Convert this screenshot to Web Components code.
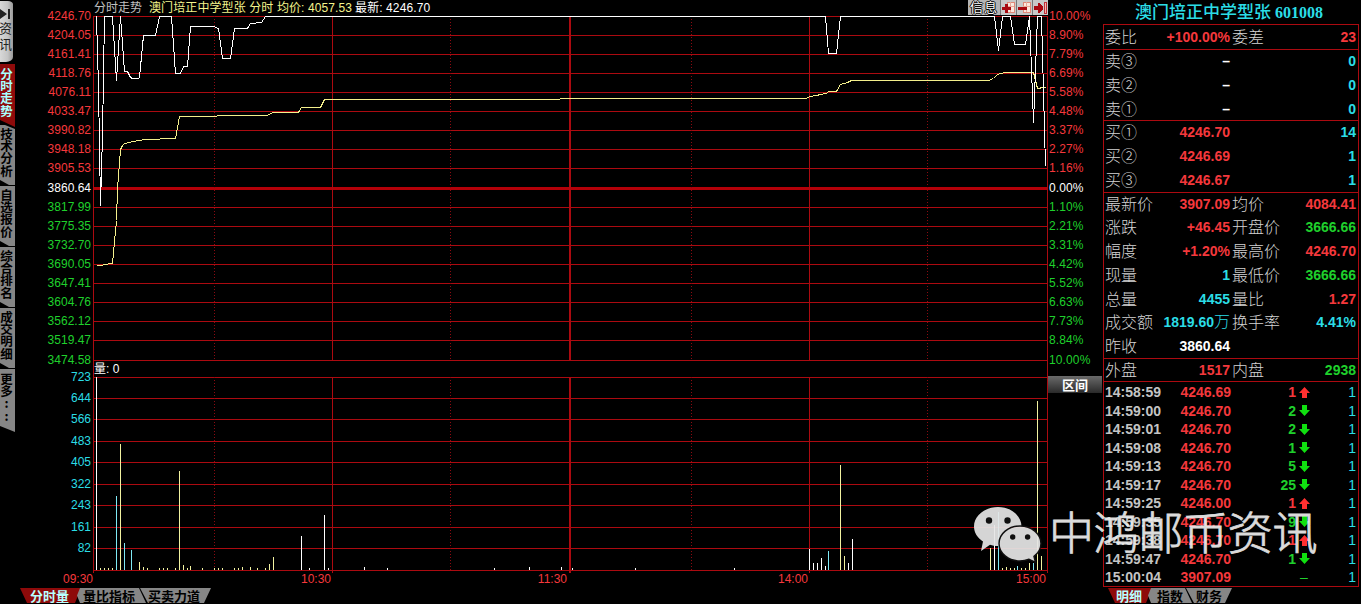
<!DOCTYPE html>
<html lang="zh-CN">
<head>
<meta charset="utf-8">
<title>分时走势</title>
<style>
    :root {
        --red: #f5383c;
        --green: #1fd02c;
        --cyan: #2bdde6;
        --line: #ac0a10;
    }
    body {
        margin: 0;
        background: #000;
        color: #c0c0c0;
        font: 12px/16px "Liberation Sans", "Noto Sans CJK SC", sans-serif;
        width: 1361px;
        height: 604px;
        overflow: hidden;
        display: flex;
        position: relative;
    }
</style>
</head>
<body>
<side-tabs></side-tabs>
<stock-chart></stock-chart>
<quote-panel></quote-panel>
<chat-watermark>中鸿邮币资讯</chat-watermark>

<script>
// Tab di sisi kiri
class SideTabs extends HTMLElement {
    connectedCallback() {
        this.attachShadow({ mode: 'open' });
        const tabs = ['技术分析', '自选报价', '综合排名', '成交明细'];
        this.shadowRoot.innerHTML = `
            <style>
                :host { display: block; width: 15px; flex: none; font-family: "Noto Sans CJK SC", sans-serif; }
                div { width: 13px; padding-right: 2px; box-sizing: content-box; overflow: hidden; text-align: center; word-break: break-all; }
                .news {
                    width: 13px; height: 54px; padding: 7px 0 0; margin-top: 1px; color: #222;
                    font-size: 13px; line-height: 16px; border-radius: 0 5px 7px 0 / 0 3px 5px 0;
                    background: linear-gradient(90deg, #d8d8d8, #c4c4c4 60%, #999);
                }
                .news svg { display: block; margin-bottom: -1px; }
                .news span { display: block; width: 13px; margin-left: -1px; }
                .on, .tab, .more { font-size: 12.5px; font-weight: 700; line-height: 12.2px; }
                .on {
                    height: 59px; padding-top: 4px; margin-top: 2px; background: #8e0a0a; color: #a8ffff;
                    clip-path: polygon(0 0, 100% 0, 100% 100%, 0 56px);
                }
                .tab, .more { background: #868686; color: #000; }
                .tab {
                    height: 57px; padding-top: 3px; margin-bottom: 1px;
                    clip-path: polygon(0 0, 100% 0, 100% 100%, 9px 100%, 0 calc(100% - 5px));
                }
                .first { margin-top: -2px; clip-path: polygon(0 0, 5px 0, 100% 4px, 100% 100%, 9px 100%, 0 calc(100% - 5px)); }
                .more { height: 59px; padding-top: 4px; clip-path: polygon(0 0, 100% 0, 100% 100%, 0 57px); }
            </style>
            <div class="news">
                <svg width="12" height="13"><path d="M0 1v10l7-5zM8 1h2v10h-2z" fill="#222"/></svg>
                <span>资讯</span>
            </div>
            <div class="on">分时走势</div>
            ${tabs.map((t, i) => `<div class="tab ${i ? '' : 'first'}">${t}</div>`).join('')}
            <div class="more">更多<br>:<br>:</div>
        `;
    }
}
customElements.define('side-tabs', SideTabs);

// Label sumbu: setiap tanda sejajar dengan garis grid
class AxisScale extends HTMLElement {
    connectedCallback() {
        this.attachShadow({ mode: 'open' });
        const labels = this.getAttribute('labels').split(' ');
        const at = this.getAttribute('at').split(' ').map(Number);
        const zero = Number(this.getAttribute('zero') || -1);
        const rows = labels.map((t, i) => {
            const h = i < at.length - 1 ? at[i + 1] - at[i] : 19;
            const cls = zero < 0 ? 'vol' : i < zero ? 'up' : i > zero ? 'down' : 'mid';
            return `<div class="${cls}" style="height:${h}px">${t}</div>`;
        });
        this.shadowRoot.innerHTML = `
            <style>
                :host { display: block; line-height: 19px; }
                .up { color: var(--red); }
                .down { color: var(--green); }
                .mid { color: #fff; }
                .vol { color: var(--cyan); }
            </style>
            ${rows.join('')}
        `;
    }
}
customElements.define('axis-scale', AxisScale);

const PRICE_Y = [16, 35, 54, 73, 92, 111, 130, 149, 168, 188, 207, 226, 245, 264, 283, 302, 321, 340, 360];
const VOL_Y = [377, 398, 419, 441, 462, 484, 505, 527, 548, 570];

const PRICE = '96,16 98,87 100,205 102,135 104,16 112,16 116,80 120,16 124,71 127,71 130,77 132,78 138,78 139,77 143,35 155,35 159,16 171,16 175,73 180,73 183,66 187,66 190,26 213,26 218,28 222,58 230,58 234,28 247,28 250,23 261,22 265,16 825,16 828,53 836,53 840,16 994,16 998,50 1002,16 1010,16 1014,44 1025,44 1029,16 1033,122 1037,16 1041,16 1045,166';
const AVERAGE = '96,265 102,265 103,264 112,263 116,220 117,188 120,149 122,145 124,143 129,142 132,141 145,139 175,138 179,116 216,116 217,115 266,115 273,112 298,112 301,107 320,107 324,99 559,99 560,98 806,98 809,96 816,95 820,94 826,93 828,91 836,91 840,84 847,82 851,80 988,80 993,78 997,74 1004,72 1033,72 1037,88 1039,88 1041,87 1045,87';

// x, puncak batang, warna
const BARS = `96,377,w 100,568 104,568 108,568 112,568 116,496,c 120,444 124,543,c 131,550,c 139,562 143,567 147,568
    159,568 163,568 167,568 175,568 179,471 183,565 187,568 190,566 202,568 214,568 218,568 222,568 234,568 238,568
    242,567 250,567 257,568 265,568 269,564 273,557 301,536,w 309,568,w 324,515,w 328,568,w 364,567,w 387,568,w
    494,568,w 529,567,w 561,567,w 572,568,w 635,568,w 734,568,w 809,549,w 813,563,w 817,563,w 821,558,w 825,566,w
    828,551,c 840,465 844,556 848,563,w 852,539,w 990,548 994,525,w 998,512,c 1002,568 1006,567 1010,568 1014,568
    1017,566,c 1021,568 1025,568 1029,563 1033,563,c 1037,401 1041,556`;

class PlotArea extends HTMLElement {
    connectedCallback() {
        this.attachShadow({ mode: 'open' });
        const hLines = PRICE_Y.concat(VOL_Y).map(y => y === 188
            ? '<rect x="93" y="187" width="954" height="3" fill="#b40008"/>'
            : `<rect x="93" y="${y}" width="954" height="1"/>`).join('');
        const spans = [[16, 345], [377, 196]];
        const vLines = spans.map(([y, h]) =>
            `<rect x="332" y="${y}" width="1" height="${h}"/>
             <rect x="569" y="${y}" width="2" height="${h}"/>
             <rect x="809" y="${y}" width="1" height="${h}"/>` +
            [214, 450, 691, 927].map(x => `<path d="M${x}.5 ${y}v${y === 377 ? 193 : h}" class="dot"/>`).join('')
        ).join('');
        const colors = { w: '#fff', c: '#7fe9f5' };
        const bars = BARS.trim().split(/\s+/).map(b => {
            const [x, y, c] = b.split(',');
            return `<rect x="${x}" y="${y}" width="1" height="${570 - y}" fill="${colors[c] || '#f2f2a0'}"/>`;
        }).join('');
        this.shadowRoot.innerHTML = `
            <style>
                :host { display: block; }
                svg { display: block; shape-rendering: crispEdges; }
                .grid { fill: var(--line); }
                .dot { stroke: #8c0a10; stroke-dasharray: 1 2; fill: none; }
                polyline { fill: none; stroke-width: 1; }
                text { font-size: 12px; fill: #fff; }
            </style>
            <svg width="955" height="558" viewBox="93 15 955 558">
                <g class="grid">
                    ${hLines}${vLines}
                    <rect x="93" y="16" width="1" height="557"/>
                    <rect x="1047" y="16" width="1" height="557"/>
                </g>
                ${bars}
                <g transform="translate(.5 .5)">
                    <polyline points="${AVERAGE}" stroke="#f4f08c"/>
                    <polyline points="${PRICE}" stroke="#fff"/>
                </g>
                <text x="94" y="373">量: 0</text>
            </svg>
        `;
    }
}
customElements.define('plot-area', PlotArea);

// Baris judul di atas grafik beserta tombol kecil
class ChartHeader extends HTMLElement {
    connectedCallback() {
        this.attachShadow({ mode: 'open' });
        this.shadowRoot.innerHTML = `
            <style>
                :host { display: flex; height: 15px; line-height: 17px; padding-left: 1px; white-space: pre; }
                .y { color: #f4f48c; margin-left: 7px; }
                .w { color: #fff; margin-left: 3px; }
                .y, .w { letter-spacing: .1px; }
                .tools { margin-left: auto; display: flex; background: #b4b4b4; width: 80px; line-height: 15px; }
                .info { width: 32px; text-align: center; font-size: 13px; color: #fff; letter-spacing: 1px;
                    text-shadow: 1px 0 #000, -1px 0 #000, 0 1px #000, 0 -1px #000; }
                svg { display: block; }
            </style>
            <span>分时走势</span><span class="y">澳门培正中学型张 分时 均价: 4057.53</span><span class="w">最新: 4246.70</span>
            <div class="tools">
                <span class="info">信息</span>
                <svg width="48" height="15" shape-rendering="crispEdges">
                    <path d="M0 0h48v15h-48z" fill="#c8c8c8"/>
                    <path d="M0 0v15M16 0v15M32 0v15" stroke="#777"/>
                    <path d="M7.500 2.500h7v10h-7zM23.500 2.500h7v10h-7z" fill="#fbe8de" stroke="#e08878"/>
                    <path d="M10 2v10M7 6.500h7M26 2v10M23 6.500h7" stroke="#e8a898"/>
                    <path d="M5 4h3v3h3v3h-3v3h-3v-3h-3v-3h3zM18 7h9v3h-9z" fill="#a80810"/>
                    <path d="M34 6h4v-3h1l4 4v2l-4 4h-1v-3h-4z" fill="#a80810"/>
                    <path d="M44.500 2.500h2v11h-2z" fill="#f4b8b0" stroke="#c03038"/>
                </svg>
            </div>
        `;
    }
}
customElements.define('chart-header', ChartHeader);

// Tab trapesium di bagian bawah
class CutTab extends HTMLElement {
    connectedCallback() {
        this.attachShadow({ mode: 'open' });
        this.shadowRoot.innerHTML = `
            <style>
                :host {
                    display: block; height: 15px; flex: none; box-sizing: border-box;
                    font: 700 13px/15px "Noto Sans CJK SC", sans-serif;
                    background: #868686; color: #000; white-space: nowrap;
                    clip-path: polygon(3px 0, calc(100% - 7px) 0, 100% 100%, 3px 100%, 0 50%);
                }
                :host([kind="on"]) {
                    background: #8e0a0a; color: #b8ffff;
                    clip-path: polygon(0 0, 100% 0, calc(100% - 6px) 100%, 7px 100%);
                }
                :host([kind="last"]) { clip-path: polygon(0 0, 100% 0, calc(100% - 7px) 100%, 8px 100%); }
            </style>
            <slot></slot>
        `;
    }
}
customElements.define('cut-tab', CutTab);

class StockChart extends HTMLElement {
    connectedCallback() {
        this.attachShadow({ mode: 'open' });
        const prices = '4246.70 4204.05 4161.41 4118.76 4076.11 4033.47 3990.82 3948.18 3905.53 3860.64 3817.99 3775.35 3732.70 3690.05 3647.41 3604.76 3562.12 3519.47 3474.58';
        const percents = '10.00% 8.90% 7.79% 6.69% 5.58% 4.48% 3.37% 2.27% 1.16% 0.00% 1.10% 2.21% 3.31% 4.42% 5.52% 6.63% 7.73% 8.84% 10.00%';
        this.shadowRoot.innerHTML = `
            <style>
                :host { display: block; width: 1088px; flex: none; }
                .main { display: grid; grid-template-columns: 78px 955px 55px; height: 573px; }
                .left { padding: 7px 2px 0 0; text-align: right; }
                .right { padding: 7px 0 0 1px; }
                .right axis-scale { letter-spacing: .12px; }
                .left axis-scale + axis-scale { margin-top: -2px; }
                button {
                    display: block; width: 54px; height: 17px; margin: 6px 0 0 -1px; padding: 0; border: 0;
                    color: #fff; font: 700 13px/16px "Noto Sans CJK SC", sans-serif;
                    background: linear-gradient(#6a6a6a, #2a2a2a);
                }
                .times { display: grid; grid-template-columns: 78px 238px 236px 241px 238px; text-align: right; color: var(--red); height: 15px; line-height: 13px; }
                .tabs { display: flex; padding-left: 5px; }
            </style>
            <div class="main">
                <div class="left">
                    <axis-scale labels="${prices}" at="${PRICE_Y.join(' ')}" zero="9"></axis-scale>
                    <axis-scale labels="723 644 566 483 405 322 243 161 82" at="${VOL_Y.slice(0, 9).join(' ')}"></axis-scale>
                </div>
                <div><chart-header></chart-header><plot-area></plot-area></div>
                <div class="right">
                    <axis-scale labels="${percents}" at="${PRICE_Y.join(' ')}" zero="9"></axis-scale>
                    <button>区间</button>
                </div>
            </div>
            <div class="times"><span>09:30</span><span>10:30</span><span>11:30</span><span>14:00</span><span>15:00</span></div>
            <div class="tabs">
                <cut-tab kind="on" style="width:61px;padding-left:10px">分时量</cut-tab>
                <cut-tab style="width:69px;margin-left:-4px;padding-left:6px">量比指标</cut-tab>
                <cut-tab kind="last" style="width:71px;margin-left:-6px;padding-left:8px">买卖力道</cut-tab>
            </div>
        `;
    }
}
customElements.define('stock-chart', StockChart);

// Satu baris kutipan: label, nilai, label, nilai
class QuoteRow extends HTMLElement {
    connectedCallback() {
        this.attachShadow({ mode: 'open' });
        this.shadowRoot.innerHTML = `
            <style>
                :host { display: grid; grid-template-columns: 52px 73px 52px 1fr; height: 23.75px; padding: 0 2px 0 1px; white-space: nowrap; }
                ::slotted(i) { font: 300 16px/22px "Noto Sans CJK SC", sans-serif; height: 22px; color: #d4d4d4; }
                ::slotted(i:nth-of-type(2)) { margin-left: 2px; }
                ::slotted(b) { justify-self: end; font-size: 14px; line-height: 24px; height: 23px; }
                ::slotted(.r) { color: var(--red); }
                ::slotted(.g) { color: var(--green); }
                ::slotted(.c) { color: var(--cyan); }
                ::slotted(.w) { color: #fff; }
            </style>
            <slot></slot>
        `;
    }
}
customElements.define('quote-row', QuoteRow);

// Satu transaksi: waktu, harga, jumlah, arah, hitungan
class TickRow extends HTMLElement {
    connectedCallback() {
        this.attachShadow({ mode: 'open' });
        const [time, price, qty, dir] = this.getAttribute('data').split(' ');
        const arrows = {
            up: '<svg width="11" height="11"><path d="M5.500 0L11 6H8v5H3V6H0z" fill="#ff3030"/></svg>',
            down: '<svg width="11" height="11"><path d="M5.500 11L11 5H8V0H3v5H0z" fill="#10e010"/></svg>',
            none: '<em>–</em>'
        };
        this.shadowRoot.innerHTML = `
            <style>
                :host { display: grid; grid-template-columns: 58px 68px 65px 20px 1fr; height: 18.5px; line-height: 18.5px; padding: 0 2px 0 1px;
                    font-size: 14px; font-weight: 700; text-align: right; align-items: center; }
                .t { text-align: left; color: #c4c4c4; }
                .p { color: var(--red); }
                .up { color: var(--red); }
                .down { color: var(--green); }
                .c { color: var(--cyan); font-weight: 400; }
                svg { display: block; margin-left: 3px; }
                em { display: block; text-align: left; padding-left: 4px; font-style: normal; font-weight: 400; color: var(--green); }
            </style>
            <span class="t">${time}</span><span class="p">${price}</span>
            <span class="${dir}">${qty === '-' ? '' : qty}</span><span>${arrows[dir]}</span><span class="c">1</span>
        `;
    }
}
customElements.define('tick-row', TickRow);

class QuotePanel extends HTMLElement {
    connectedCallback() {
        this.attachShadow({ mode: 'open' });
        const sections = [
            [25, ['委比|+100.00%|r|委差|23|r']],
            [71, ['卖③|–|w||0|c', '卖②|–|w||0|c', '卖①|–|w||0|c']],
            [72, ['买①|4246.70|r||14|c', '买②|4246.69|r||1|c', '买③|4246.67|r||1|c']],
            [166, ['最新价|3907.09|r|均价|4084.41|r', '涨跌|+46.45|r|开盘价|3666.66|g', '幅度|+1.20%|r|最高价|4246.70|r',
                '现量|1|c|最低价|3666.66|g', '总量|4455|c|量比|1.27|r', '成交额|1819.60万|c|换手率|4.41%|c', '昨收|3860.64|w|||']],
            [23, ['外盘|1517|r|内盘|2938|g']]
        ];
        const row = s => {
            const [a, v, c, b, v2, c2] = s.split('|');
            const val = v.replace('万', '<span style="font:300 16px/1 \'Noto Sans CJK SC\',sans-serif">万</span>');
            return `<quote-row><i>${a}</i><b class="${c}">${val}</b><i>${b}</i><b class="${c2}">${v2}</b></quote-row>`;
        };
        const ticks = ['14:58:59 4246.69 1 up', '14:59:00 4246.70 2 down', '14:59:01 4246.70 2 down', '14:59:08 4246.70 1 down',
            '14:59:13 4246.70 5 down', '14:59:17 4246.70 25 down', '14:59:25 4246.00 1 up', '14:59:35 4246.70 9 down',
            '14:59:38 4246.70 1 up', '14:59:47 4246.70 1 down', '15:00:04 3907.09 - none'];
        this.shadowRoot.innerHTML = `
            <style>
                :host { display: block; width: 256px; flex: none; }
                h1 { margin: 0; height: 24px; font: 500 17px/22px "Noto Sans CJK SC", sans-serif; color: var(--cyan); text-align: center; white-space: nowrap; padding-right: 4px; }
                h1 span { font: 700 16px/22px "Liberation Serif", serif; }
                .frame { border: 1px solid var(--line); box-sizing: border-box; height: 563px; }
                section { border-bottom: 1px solid var(--line); box-sizing: border-box; display: flow-root; }
                section:nth-of-type(n+2) quote-row:first-child { margin-top: -1px; }
                section:nth-of-type(4) quote-row:first-child { margin-top: -1.5px; }
                .ticks { padding-top: 1px; }
                .tabs { display: flex; padding: 1px 0 0 5px; }
            </style>
            <h1>澳门培正中学型张 <span>601008</span></h1>
            <div class="frame">
                ${sections.map(([h, rows]) => `<section style="height:${h}px">${rows.map(row).join('')}</section>`).join('')}
                <div class="ticks">${ticks.map(t => `<tick-row data="${t}"></tick-row>`).join('')}</div>
            </div>
            <div class="tabs">
                <cut-tab kind="on" style="width:44px;padding-left:8px">明细</cut-tab>
                <cut-tab style="width:44px;margin-left:-4px;padding-left:9px">指数</cut-tab>
                <cut-tab kind="last" style="width:46px;margin-left:-6px;padding-left:10px">财务</cut-tab>
            </div>
        `;
    }
}
customElements.define('quote-panel', QuotePanel);

// Tanda air di atas konten
class ChatWatermark extends HTMLElement {
    connectedCallback() {
        this.attachShadow({ mode: 'open' });
        this.shadowRoot.innerHTML = `
            <style>
                :host { position: absolute; left: 973px; top: 504px; display: flex; opacity: .93; color: #ececec;
                    font: 300 45px/54px "Noto Sans CJK SC", sans-serif; white-space: nowrap; letter-spacing: -.3px;
                    -webkit-text-stroke: .8px #ececec; }
                svg { flex: none; margin-right: 6px; }
            </style>
            <svg width="70" height="60" viewBox="973 504 70 60">
                <path d="M998 507c13 0 23.500 8.600 23.500 19.500S1011 546 998 546c-3 0-5.500-.4-8-1.200L981 551l2-9.500c-5.500-3.500-9-9-9-15C974 515.600 985 507 998 507z" fill="#e6e6e6"/>
                <path d="M1020 526c11.600 0 21 7.800 21 17.500 0 5-2.700 9.600-7 12.800l1.500 6.200-6.500-3.200c-2.800 1.100-5.800 1.700-9 1.700-11.600 0-21-7.800-21-17.500s9.400-17.500 21-17.500z" fill="#e6e6e6" stroke="#111" stroke-width="1.500"/>
                <g fill="#111"><circle cx="989" cy="520.500" r="3.200"/><circle cx="1007.500" cy="520.500" r="3.200"/>
                <circle cx="1012.700" cy="537" r="2.700"/><circle cx="1027.600" cy="537" r="2.700"/></g>
            </svg>
            <slot></slot>
        `;
    }
}
customElements.define('chat-watermark', ChatWatermark);
</script>
</body>
</html>
